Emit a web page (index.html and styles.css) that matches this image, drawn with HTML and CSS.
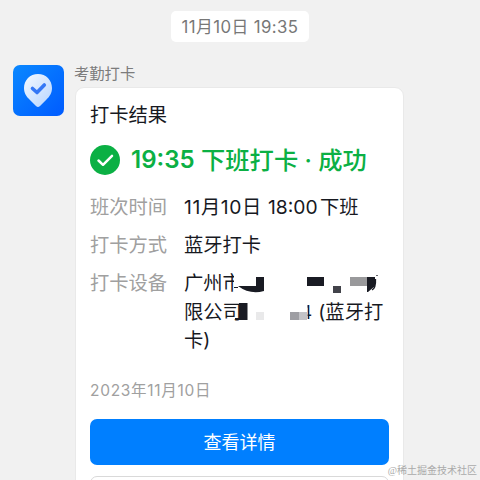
FILE: index.html
```
<!DOCTYPE html>
<html lang="zh-CN">
<head>
<meta charset="utf-8">
<title>考勤打卡</title>
<link rel="stylesheet" href="styles.css">
</head>
<body>
<main class="chat">
  <time class="stamp">11月10日 19:35</time>
  <section class="message">
    <svg class="avatar" viewBox="0 0 51 51">
      <defs>
        <linearGradient id="bg" x1="0" y1="0" x2="1" y2="1"><stop offset="0" stop-color="#0a88ff"/><stop offset="1" stop-color="#005bff"/></linearGradient>
        <linearGradient id="pin" x1="0" y1="0" x2="1" y2="1"><stop offset="0" stop-color="#f4faff"/><stop offset="1" stop-color="#b5d4ff"/></linearGradient>
      </defs>
      <rect width="51" height="51" rx="7" fill="url(#bg)"/>
      <path d="M25 9C17 9 11 15.200 11 23C11 28 13.300 31.500 16.500 34.500L23 41Q25 43 27 41L33.500 34.500C36.700 31.500 39 28 39 23C39 15.200 33 9 25 9Z" fill="url(#pin)"/>
      <path d="M19.500 23.500L24 27.500L31.300 20" fill="none" stroke="#3478f6" stroke-width="3.600" stroke-linejoin="round" stroke-linecap="round"/>
    </svg>
    <div class="content">
      <div class="sender">考勤打卡</div>
      <article class="card">
        <h1 class="title">打卡结果</h1>
        <div class="status">
          <svg class="check" viewBox="0 0 30 30"><circle cx="15" cy="15" r="15" fill="#0bb044"/><path d="M8.500 15.500L13 19.800L22 10.800" fill="none" stroke="#fff" stroke-width="2.500" stroke-linecap="round" stroke-linejoin="round"/></svg>
          <span class="result"><span class="result-time">19:35</span><span>下班打卡</span><span class="dot">·</span><span>成功</span></span>
        </div>
        <dl class="details">
          <dt>班次时间</dt><dd><span class="date">11月10日</span><span class="hour">18:00</span>下班</dd>
          <dt>打卡方式</dt><dd>蓝牙打卡</dd>
          <dt>打卡设备</dt>
          <dd class="device">广州市<br>限公司<span class="gap"></span>4<span class="paren">(</span>蓝牙打<br>卡)
            <svg class="mask" viewBox="0 0 200 56">
              <path d="M50 0H200V27H50ZM55 29H123.500V54H55Z" fill="#fff"/>
              <path d="M72 8H80V22Q66 26 54 17H72ZM123 8H140V17H123ZM55 34H63.500V51H55ZM183 8H191V17L184 23H183Z" fill="#191b23"/>
              <path d="M50 18H54V19H50ZM51 49H56V50H51Z" fill="#191b23"/>
              <path d="M149 17H157V24H149Z" fill="#42434a"/>
              <path d="M166 8H183V17H166Z" fill="#99999b"/>
              <path d="M106 43H115V51H106Z" fill="#9e9ea3"/>
              <path d="M115 43H123V51H115Z" fill="#c3c3c7"/>
              <path d="M72 43H80V51H72Z" fill="#e9e9ea"/>
              <path d="M191.500 10Q192 19 188 21M193 6V7" fill="none" stroke="#191b23" stroke-width="1.300"/>
            </svg>
          </dd>
        </dl>
        <div class="day"><span class="year">2023</span>年<span class="month">11</span>月10日</div>
        <div class="button primary">查看详情</div>
        <div class="button secondary"></div>
      </article>
    </div>
  </section>
  <div class="watermark">@稀土掘金技术社区</div>
</main>
</body>
</html>
```

FILE: styles.css
```
* { box-sizing: border-box; }
body { margin: 0; background: #f1f1f1; color: #17191f; font-family: Inter, "Noto Sans CJK SC", sans-serif; }
.chat { position: relative; width: 480px; height: 480px; overflow: hidden; padding-top: 11px; }
.stamp { display: block; width: 138px; height: 31px; margin: 0 0 0 171px; border-radius: 5px; background: #fff; color: #777; font-size: 16.8px; line-height: 32px; text-align: center; letter-spacing: .4px; white-space: nowrap; }
.message { display: flex; padding: 23px 0 0 13px; }
.avatar { width: 51px; height: 51px; flex: none; }
.content { margin-left: 11px; width: 329px; }
.sender { height: 22px; margin-left: -1px; color: #7c7c7c; font-size: 15.3px; line-height: 17px; }
.card { height: 420px; padding: 15px 14px 0; border: 1px solid #e9e9e9; border-radius: 9px; background: #fff; }
.title { height: 26px; margin: 0; font-size: 19.3px; line-height: 25px; font-weight: 400; }
.status { display: flex; align-items: center; height: 30px; margin-top: 16px; color: #0bb044; }
.check { width: 30px; height: 30px; flex: none; }
.result { display: flex; margin-left: 11px; font-size: 24.3px; line-height: 30px; font-weight: 500; white-space: nowrap; }
.result-time { width: 70px; font-weight: 600; font-size: 24px; }
.dot { width: 20px; text-align: center; }
.details { display: grid; grid-template-columns: 94px 1fr; row-gap: 10px; margin: 17.5px 0 0; font-size: 19.3px; line-height: 28.4px; }
dt { color: #a0a0a0; }
dd { margin: 0; white-space: nowrap; }
.date { display: inline-block; width: 84px; letter-spacing: .6px; }
.hour { display: inline-block; width: 52px; }
.device { position: relative; }
.gap { display: inline-block; width: 58px; }
.paren { margin-left: 6px; }
.mask { position: absolute; left: 0; top: 0; width: 200px; height: 56px; }
.day { margin-top: 25px; height: 20px; color: #a0a0a0; font-size: 15.5px; line-height: 21px; letter-spacing: .7px; }
.button { border-radius: 7px; height: 46px; }
.primary { margin-top: 19.5px; background: #007fff; color: #fff; text-align: center; font-size: 18px; line-height: 47px; }
.secondary { margin-top: 11px; border: 1px solid #d9d9d9; }
.watermark { position: absolute; right: 3px; bottom: 1px; color: #aaa; font-family: "Liberation Serif", "Noto Sans CJK SC", serif; font-size: 10px; line-height: 16px; white-space: nowrap; }
```
